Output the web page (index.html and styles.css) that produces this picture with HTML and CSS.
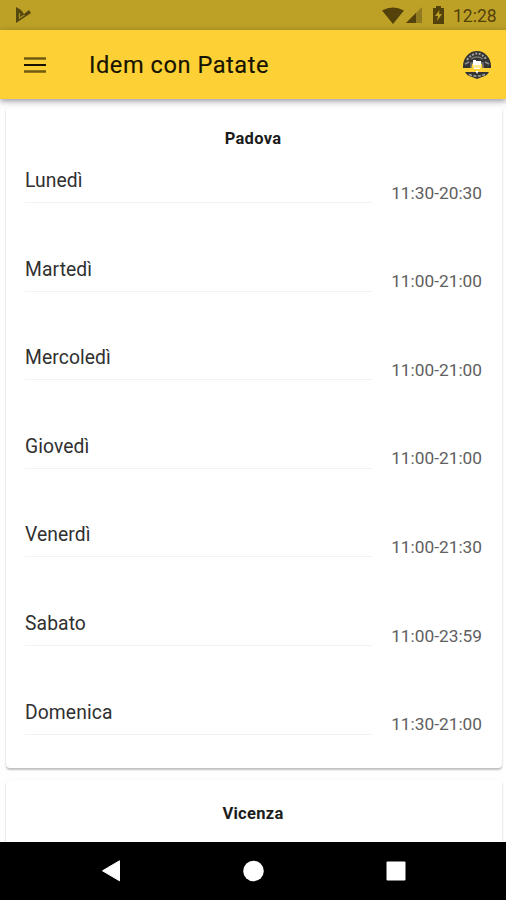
FILE: index.html
```html
<!DOCTYPE html>
<html lang="it">
<head>
<meta charset="utf-8">
<title>Idem con Patate</title>
<link rel="stylesheet" href="styles.css">
</head>
<body>
<div class="screen">
  <div class="status">
    <svg class="play" width="18" height="18" viewBox="0 0 18 18"><path fill="#54470f" d="M1 1l5 3 3 4 5-4 2 3L1 17z"/><path d="M4.500 7v5l5-3" fill="none" stroke="#a38b20" stroke-width="1.300"/></svg>
    <svg class="wifi" width="22" height="17" viewBox="0 0 22 17"><path fill="#54420b" d="M0 3.500Q11-2.500 22 3.500L11 17z"/></svg>
    <svg class="signal" width="16" height="16" viewBox="0 0 16 16"><path fill="#927a20" d="M16 0v16H0z"/><path fill="#54420b" d="M10 6v10H0z"/></svg>
    <svg class="battery" width="11" height="18" viewBox="0 0 11 18"><path fill="#54420b" d="M3 0h5v2h3v16H0V2h3z"/><path fill="#bda026" d="M6.500 4L2 10h3l-1 5 5-7H6z"/></svg>
    <span class="clock">12:28</span>
  </div>
  <header class="bar">
    <svg class="menu" width="22" height="16" viewBox="0 0 22 16"><path d="M0 1.500h22M0 14.500h22" stroke="#705a10" stroke-width="2.400"/><path d="M0 8h22" stroke="#171300" stroke-width="2"/></svg>
    <h1>Idem con Patate</h1>
    <svg class="logo" width="30" height="30" viewBox="0 0 30 30">
      <path fill="#343434" d="M1 16a14 15 0 0 1 28 0v2h-7l-3-6h-8l-3 6H1zM3 22h24q-2 4-7 5l-5 2-5-2q-5-1-7-5z"/>
      <path d="M5 10q10-13 20 0" fill="none" stroke="#a3a4a0" stroke-width="2" stroke-dasharray="2 1.500"/>
      <path d="M9 9q6-4 12 0" fill="none" stroke="#77776f" stroke-width="1.500"/>
      <path d="M3 14l4-2M27 14l-4-2" stroke="#8d8d90" stroke-width="1.500"/>
      <path d="M9 18v-5h2M21 18v-5h-2" stroke="#6d6d70" stroke-width="1.500" fill="none"/>
      <path fill="#fff" d="M11 10h3v1h5v3l-1 5h-6l-1-5z"/>
      <path fill="#ffe98a" d="M12 15h6v3h-6z"/>
      <path d="M7 24.500q8 3 16 0" fill="none" stroke="#a8a8a5" stroke-width="1.500" stroke-dasharray="3 1.500"/>
      <path fill="#fff" d="M13.500 21h3l-1.500 3z"/>
    </svg>
  </header>
  <main class="content">
    <section class="card">
      <h2>Padova</h2>
      <div class="row"><span class="day">Lunedì</span><span class="time">11:30-20:30</span></div>
      <div class="row"><span class="day">Martedì</span><span class="time">11:00-21:00</span></div>
      <div class="row"><span class="day">Mercoledì</span><span class="time">11:00-21:00</span></div>
      <div class="row"><span class="day">Giovedì</span><span class="time">11:00-21:00</span></div>
      <div class="row"><span class="day">Venerdì</span><span class="time">11:00-21:30</span></div>
      <div class="row"><span class="day">Sabato</span><span class="time">11:00-23:59</span></div>
      <div class="row"><span class="day">Domenica</span><span class="time">11:30-21:00</span></div>
    </section>
    <section class="card card-next"><h2>Vicenza</h2></section>
  </main>
  <nav class="nav">
    <svg width="506" height="58" viewBox="0 0 506 58"><path fill="#fff" stroke="#fff" stroke-linejoin="round" d="M102.500 28.800L119.500 18.800v20z"/><circle cx="253.500" cy="29" r="10.300" fill="#fff"/><rect x="386.500" y="19.500" width="19" height="19" rx="1" fill="#fff"/></svg>
  </nav>
</div>
</body>
</html>
```
FILE: styles.css
```css
* { box-sizing: border-box; }
body { margin: 0; font-family: Roboto, "Liberation Sans", sans-serif; }
svg { display: block; flex: none; }
.screen { display: flex; flex-direction: column; width: 506px; height: 900px; overflow: hidden; background: #fefefe; }
.status { display: flex; align-items: center; height: 30px; padding: 0 9px 0 15px; background: #bda026; flex: none; }
.wifi { margin-left: auto; }
.signal { margin-left: 2px; }
.battery { margin-left: 11px; }
.clock { width: 44px; margin: 2px 0 0 9px; font-size: 17.500px; line-height: 20px; color: #54420b; white-space: nowrap; }
.bar { display: flex; align-items: center; height: 69px; padding: 0 14px 0 24px; background: #fdd135; box-shadow: 0 2px 6px rgba(40, 40, 60, .5); flex: none; z-index: 1; }
.bar h1 { margin: 1px auto 0 43px; font-size: 23.600px; line-height: 28px; font-weight: 400; letter-spacing: .55px; color: #171300; -webkit-text-stroke: .15px #171300; }
.content { flex: 1; min-height: 0; overflow: hidden; padding: 8px 4px 0 6px; }
.card { height: 661px; margin-bottom: 12px; padding: 22px 20px 0; background: #fff; border-radius: 4px; box-shadow: 0 2px 2px rgba(0, 0, 0, .24), 0 0 2px rgba(0, 0, 0, .06); }
.card-next { padding-top: 24px; }
.card h2 { margin: 0 0 20px; padding-right: 2px; font-size: 16.500px; line-height: 20px; font-weight: 700; letter-spacing: .3px; text-align: center; color: #1c1c1c; }
.row { display: flex; align-items: flex-start; justify-content: space-between; height: 88.600px; margin-top: -8px; margin-bottom: 8px; }
.day { width: 347px; height: 42px; margin-left: -1px; border-bottom: 1px solid #f2f2f2; font-size: 19.300px; line-height: 40.400px; letter-spacing: .1px; color: #303030; }
.time { font-size: 17.300px; line-height: 24px; margin-top: 19.600px; color: #606060; }
.nav { height: 58px; background: #000; flex: none; }
```
